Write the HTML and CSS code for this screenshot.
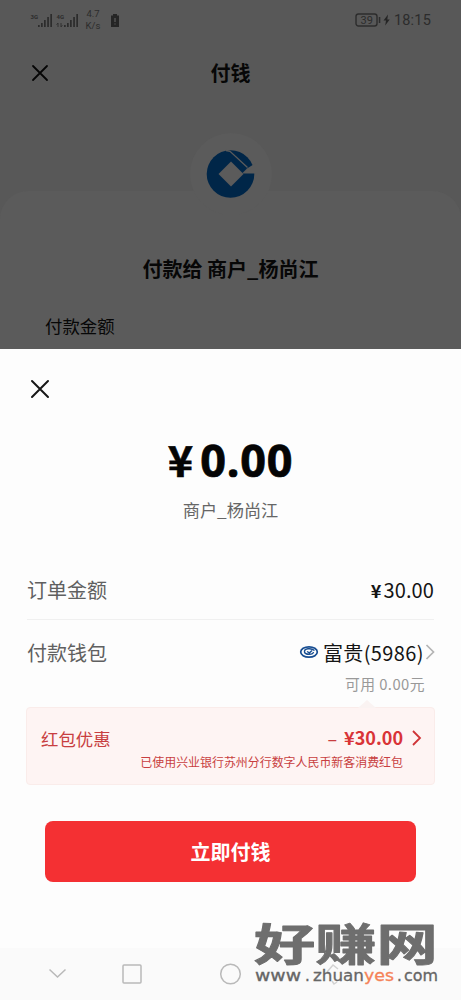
FILE: index.html
```html
<!DOCTYPE html>
<html lang="zh-CN">
<head>
<meta charset="utf-8">
<title>付钱</title>
<link rel="stylesheet" href="styles.css">
</head>
<body>
<div class="screen">
  <section class="backdrop">
    <div class="status">
      <svg class="signals" width="50" height="18" viewBox="0 0 50 18">
        <g fill="#2c2c2c">
          <path d="M8 14h1.700v2H8zM11 12h1.700v4H11zM14 9h1.700v7H14zM17.200 6h1.700v10h-1.700zM20.300 3H22v13h-1.700z"/>
          <path d="M34 14h1.700v2H34zM37 12h1.700v4H37zM40 9h1.700v7H40zM43.200 6h1.700v10h-1.700zM46.300 3H48v13h-1.700z"/>
        </g>
        <text x="0.500" y="8" class="net">3G</text><text x="26.500" y="8" class="net">4G</text>
        <path d="M28 12v4m-1.400-2.300L28 12m3 0v4m1.300-1.800L31 16" fill="none" stroke="#303030"/>
      </svg>
      <div class="speed"><span>4.7</span><span>K/s</span></div>
      <svg class="cell" width="10" height="16" viewBox="0 0 10 16"><path d="M3 2h4v1.500h2V15H1V3.500h2z" fill="#252525"/><path d="M5 6v4m0 1.500v1" stroke="#555" stroke-width="1.400"/></svg>
      <div class="power">
        <svg width="36" height="16" viewBox="0 0 36 16">
          <rect x="1" y="2" width="21" height="12" rx="2.500" fill="none" stroke="#2c2c2c" stroke-width="1.400"/>
          <path d="M23.800 5h1.500v6h-1.500z" fill="#2c2c2c"/>
          <text x="5.500" y="11.800" class="charge">39</text>
          <path d="M33 2.500l-4.500 6H31l-.8 5 4.500-6h-2.400z" fill="#252525"/>
        </svg>
        <span class="clock">18:15</span>
      </div>
    </div>
    <header class="title-bar">
      <svg width="18" height="18" viewBox="0 0 18 18"><path d="M2 2l14 14M16 2L2 16" stroke="#050505" stroke-width="1.800" stroke-linecap="round"/></svg>
      <h1>付钱</h1><i></i>
    </header>
    <div class="payee-card">
      <div class="logo">
        <svg width="50" height="52" viewBox="0 0 50 52">
          <circle cx="24.500" cy="26" r="23.800" fill="#002648"/>
          <path d="M25 13.500L37.500 26 25 38.500 12.500 26z" fill="#5b5b5b"/>
          <path d="M41 20.500L50 15v10.500H36z" fill="#5b5b5b"/>
          <path d="M20 2.500l4 .8L41.500 19.500" fill="none" stroke="#5b5b5b" stroke-width="1.300"/>
        </svg>
      </div>
      <h2>付款给 商户_杨尚江</h2>
      <p>付款金额</p>
    </div>
  </section>
  <main class="sheet">
    <div class="close"><svg width="20" height="20" viewBox="0 0 20 20"><path d="M2 2l16 16M18 2L2 18" stroke="#171717" stroke-width="2" stroke-linecap="round"/></svg></div>
    <div class="total"><span class="yen">¥</span><span class="amount">0.00</span></div>
    <div class="merchant">商户_杨尚江</div>
    <div class="row order"><span class="label">订单金额</span><span class="value"><b>¥</b>30.00</span></div>
    <div class="row wallet">
      <span class="label">付款钱包</span>
      <div class="value">
        <svg class="bank" width="20" height="14" viewBox="0 0 20 14" fill="none" stroke="#174d91"><ellipse cx="10" cy="7" rx="8.300" ry="5.200" stroke-width="1.700"/><path d="M15.500 5.500C12 2.500 5 3.500 5.500 7c.6 3 8.500 3 9 0M8 6.500l2.500 1.300L13 5.500" stroke-width="1.400"/></svg>
        <span class="wallet-name">富贵(5986)</span>
        <svg width="12" height="18" viewBox="0 0 12 18"><path d="M2.500 2l7 7-7 7" fill="none" stroke="#b4b4b4" stroke-width="1.700"/></svg>
      </div>
    </div>
    <div class="available">可用 0.00元</div>
    <div class="bonus">
      <svg class="pointer" width="18" height="10" viewBox="0 0 18 10"><path d="M0 10L9 2l9 8z" fill="#faf3f2"/></svg>
      <div class="bonus-line"><span class="bonus-name">红包优惠</span><span class="minus">–</span><strong>¥30.00</strong><svg width="12" height="18" viewBox="0 0 12 18"><path d="M2 2l7 7-7 7" fill="none" stroke="#cf3437" stroke-width="1.800"/></svg></div>
      <div class="bonus-note">已使用兴业银行苏州分行数字人民币新客消费红包</div>
    </div>
    <button class="pay">立即付钱</button>
  </main>
  <nav class="nav">
    <svg width="461" height="52" viewBox="0 0 461 52" fill="none" stroke="#b9b9b9" stroke-width="1.500"><path d="M49.500 21.500l8 7.500 8-7.500"/><rect x="123" y="17" width="18" height="18" rx="1"/><circle cx="230.500" cy="26" r="9.800"/><path d="M327 24l6-7 5 4m-6 12l2 3 3-2" stroke="#d2d2d2"/></svg>
  </nav>
  <div class="watermark">
    <svg width="190" height="70" viewBox="0 0 190 70">
      <g transform="translate(0 43) scale(1.010 .74)"><text class="mark" x="1" y="0" textLength="182" lengthAdjust="spacingAndGlyphs">好赚网</text></g>
      <g class="site">
        <text x="2" y="63" textLength="46" lengthAdjust="spacingAndGlyphs">www</text>
        <text x="52" y="63">.</text>
        <text x="60" y="63" textLength="51" lengthAdjust="spacingAndGlyphs">zhuan</text>
        <text class="accent" x="111" y="63" textLength="30" lengthAdjust="spacingAndGlyphs">yes</text>
        <text x="144" y="63">.</text>
        <text x="151" y="63" textLength="34" lengthAdjust="spacingAndGlyphs">com</text>
      </g>
    </svg>
  </div>
</div>
</body>
</html>
```
FILE: styles.css
```css
* { box-sizing: border-box; }
body { margin: 0; font-family: "Noto Sans CJK SC", sans-serif; background: #fdfdfd; }
h1, h2, p { margin: 0; }
svg { display: block; flex: none; }
.screen { position: relative; width: 461px; height: 1000px; overflow: hidden; }
.backdrop { height: 349px; background: #585858; color: #070707; overflow: hidden; }
.status { height: 40px; padding: 0 30px; display: flex; align-items: center; color: #2c2c2c; font-family: Roboto, sans-serif; }
.net { font: bold 6px Roboto, sans-serif; fill: #2c2c2c; }
.speed { display: flex; flex-direction: column; width: 26px; text-align: center; font-size: 9.500px; line-height: 12px; }
.cell { margin-left: 4px; }
.power { margin-left: auto; display: flex; align-items: center; gap: 3px; }
.charge { font: 11px Roboto, sans-serif; fill: #2c2c2c; }
.clock { font-size: 14.500px; letter-spacing: .2px; }
.title-bar { height: 65px; padding: 0 31px; display: flex; align-items: center; justify-content: space-between; }
.title-bar i { width: 18px; }
.title-bar h1 { font-size: 20px; line-height: 28px; font-weight: 700; }
.payee-card { margin-top: 86px; height: 158px; border-radius: 28px 28px 0 0; background: #5b5b5b; display: flex; flex-direction: column; align-items: center; }
.logo { flex: none; width: 82px; height: 82px; margin-top: -58px; border-radius: 50%; background: #5b5b5b; display: grid; place-items: center; }
.payee-card h2 { margin-top: 39px; font-size: 20px; line-height: 30px; font-weight: 700; }
.payee-card p { align-self: flex-start; margin: 29px 0 0 45px; font-size: 17.400px; line-height: 26px; }
.sheet { height: 599px; background: #fdfdfd; color: #151515; display: flex; flex-direction: column; }
.close { padding: 30px 0 0 30px; height: 80px; }
.total { height: 62px; display: flex; align-items: center; justify-content: center; gap: 7px; font-weight: 700; line-height: 62px; color: #050505; }
.yen { font-size: 43px; position: relative; top: -2px; -webkit-text-stroke: .6px #050505; }
.amount { font-family: "Noto Sans", "Noto Sans CJK SC", sans-serif; font-size: 45px; letter-spacing: .8px; -webkit-text-stroke: .7px #050505; }
.merchant { height: 36px; line-height: 37px; text-align: center; font-size: 17.200px; color: #666; }
.row { margin: 0 27px; display: flex; justify-content: space-between; align-items: center; font-size: 20px; }
.label { color: #606060; }
.order { margin-top: 33px; height: 60px; padding-bottom: 1px; border-bottom: 1px solid #f0f0f0; }
.order .value { letter-spacing: .1px; }
.order b { font-size: 18px; margin-right: 2px; }
.wallet { height: 64px; margin-right: 25px; }
.wallet .value { display: flex; align-items: center; }
.wallet-name { letter-spacing: .4px; }
.bank { margin-right: 4px; }
.available { height: 24px; margin-top: -12px; line-height: 24px; text-align: right; padding-right: 36px; font-size: 14.800px; letter-spacing: .45px; color: #999; }
.bonus { position: relative; margin: 11px 26px 0; height: 78px; background: #fef4f3; border: 1px solid #faecea; border-radius: 4px; color: #c83e40; }
.pointer { position: absolute; right: 58px; top: -10px; }
.bonus-line { height: 43px; padding: 17px 11px 0 14px; display: flex; align-items: center; }
.bonus-name { font-size: 17.400px; margin-right: auto; }
.minus { font-size: 18px; margin-right: 7px; }
.bonus strong { font-size: 18px; line-height: 26px; margin-right: 8px; color: #d93337; position: relative; top: -1px; }
.bonus-note { text-align: right; padding-right: 31px; font-size: 11.950px; line-height: 22px; }
.pay { margin: 36px 45px 0; height: 61px; padding: 0; border: 0; border-radius: 8px; background: #f43033; color: #fff; font: 700 20px "Noto Sans CJK SC", sans-serif; }
.nav { height: 52px; background: #fafafa; }
.watermark { position: absolute; left: 253px; top: 918px; }
.watermark svg { overflow: visible; }
.mark { font: 700 60px "Noto Sans CJK SC", sans-serif; fill: #6e6e6e; stroke: #6e6e6e; stroke-width: 1.200px; stroke-linejoin: round; }
.site { font: 15px "DejaVu Sans", sans-serif; fill: #666; stroke: #666; stroke-width: .3px; }
.accent { fill: #f58257; stroke: #f58257; }
```
